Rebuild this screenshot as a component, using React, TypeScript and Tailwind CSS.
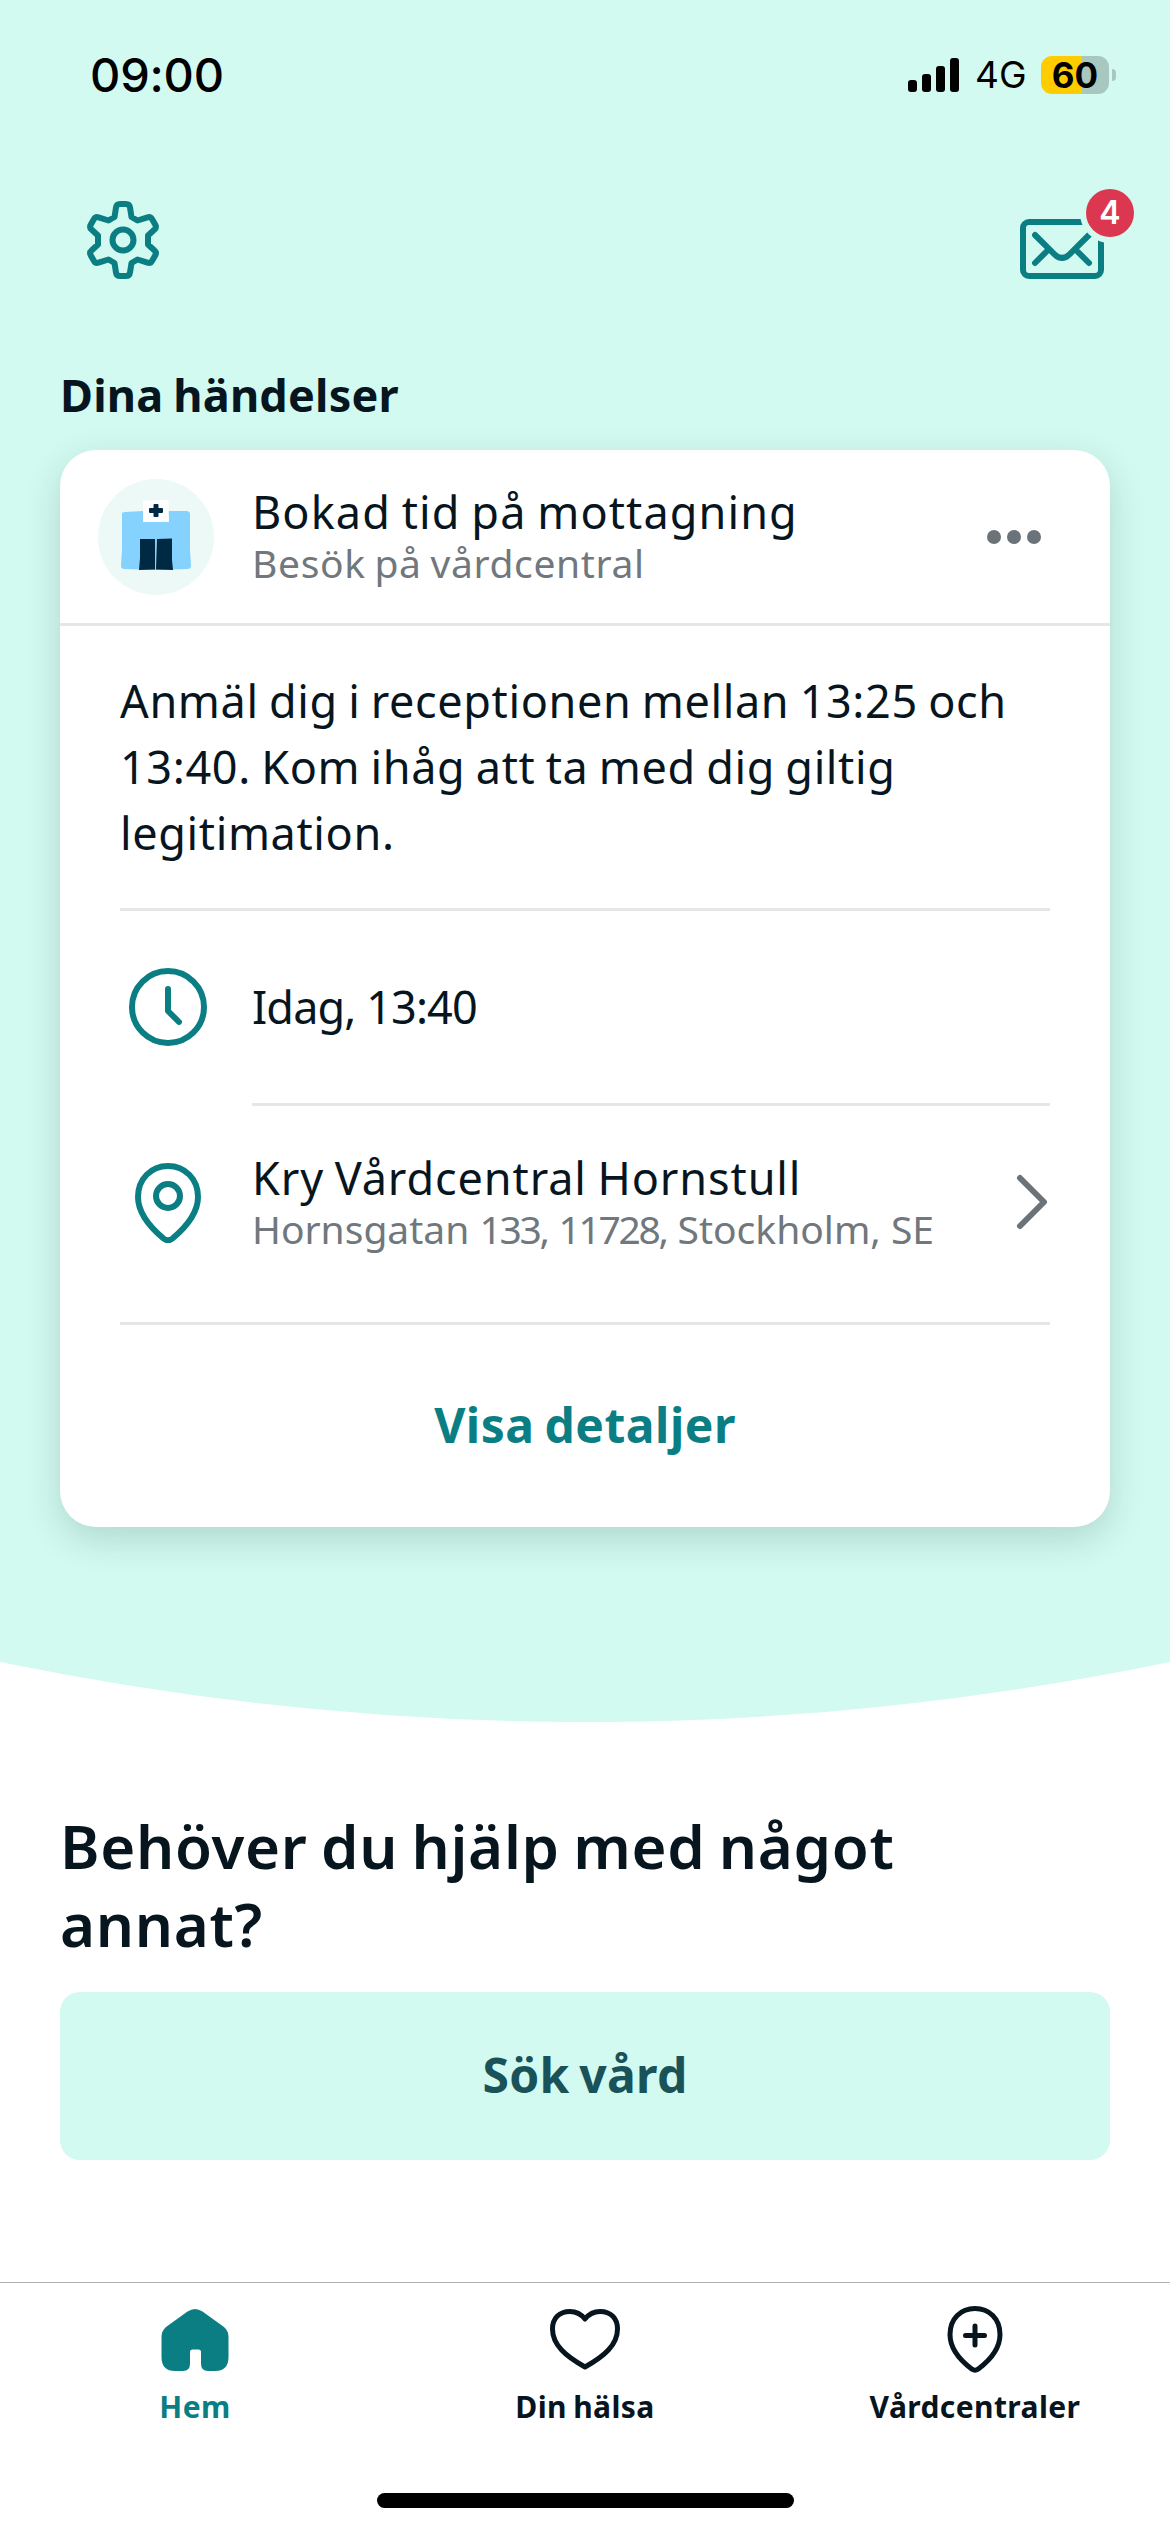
import type { ReactNode } from "react";

const FONT = "font-['Noto_Sans','Open_Sans',sans-serif]";
const STATUS_FONT = "font-['Inter','Liberation_Sans',sans-serif]";

function GearIcon() {
  return (
    <svg width="78" height="84" viewBox="84 198 78 84" fill="none" stroke="#0b7e84" strokeWidth="6" strokeLinejoin="round">
      <path d="M120 204H126Q129.500 204 130 207.500L131.500 217L137.500 220.500L147.500 217.300Q150.500 216.300 152 219L155.300 224.800Q156.800 227.500 154.500 229.500L148 235.500V244.500L154.500 250.500Q156.800 252.500 155.300 255.200L152 261Q150.500 263.700 147.500 262.700L137.500 259.500L131.500 263L130 272.500Q129.500 276 126 276H120Q116.500 276 116 272.500L114.500 263L108.500 259.500L98.500 262.700Q95.500 263.700 94 261L90.700 255.200Q89.200 252.500 91.500 250.500L98 244.500V235.500L91.500 229.500Q89.200 227.500 90.700 224.800L94 219Q95.500 216.300 98.500 217.300L108.500 220.500L114.500 217L116 207.500Q116.500 204 120 204Z" />
      <circle cx="123" cy="240" r="10.500" />
    </svg>
  );
}

function MailIcon() {
  return (
    <svg width="84" height="60" viewBox="1020 219 84 60" fill="none" stroke="#0b7e84" strokeWidth="6" strokeLinecap="round">
      <mask id="badge-gap" maskUnits="userSpaceOnUse" x="1010" y="180" width="110" height="110">
        <rect x="1010" y="180" width="110" height="110" fill="#fff" stroke="none" />
        <circle cx="1110" cy="213" r="30" fill="#000" stroke="none" />
      </mask>
      <g mask="url(#badge-gap)">
        <rect x="1023" y="222" width="78" height="54" rx="6" />
        <path d="M1035 235L1054.500 254.300Q1062 261.500 1069.500 254.300L1089 235M1035 263L1048 250M1089 263L1076 250" />
      </g>
    </svg>
  );
}

function ClinicIcon() {
  return (
    <svg width="116" height="116" viewBox="98 479 116 116">
      <circle cx="156" cy="537" r="58" fill="#edf9f7" />
      <path d="M122 514Q122 512 125 512L143 511H187Q190 511.500 190 514V550L191 566Q191 569 187 569L157 570L124 569Q121 568.500 121 566L122 550Z" fill="#84d2fd" />
      <path d="M143 500.500L168.500 500L169 522H143Z" fill="#fff" />
      <path d="M154.500 504H157.500Q158.500 504 158.500 505V508H162Q163 508 163 509V512Q163 513 162 513H158.500V516Q158.500 517 157.500 517H154.500Q153.500 517 153.500 516V513H150Q149 513 149 512V509Q149 508 150 508H153.500V505Q153.500 504 154.500 504Z" fill="#002943" />
      <path d="M140 539H155V569.500L139 570L140 558ZM157 539L172 538.500V560L173 570L156 569.500Z" fill="#002943" />
    </svg>
  );
}

function ClockIcon() {
  return (
    <svg width="78" height="78" viewBox="0 0 78 78" fill="none" stroke="#0b7e84" strokeWidth="6" strokeLinecap="round" strokeLinejoin="round">
      <circle cx="39" cy="39" r="36" />
      <path d="M39 21V43L50 54" />
    </svg>
  );
}

function PinIcon() {
  return (
    <svg width="66" height="80" viewBox="0 0 66 80" fill="none" stroke="#0b7e84" strokeWidth="6" strokeLinejoin="round">
      <path d="M33 3C16 3 3 16 3 34C3 50 16 65 28.500 75.500Q33 79 37.500 75.500C50 65 63 50 63 34C63 16 50 3 33 3Z" />
      <circle cx="33" cy="33" r="12" />
    </svg>
  );
}

function HomeIcon() {
  return (
    <svg width="68" height="62" viewBox="0 0 68 62" fill="#0b7e84">
      <path d="M26.500 2.500Q34 -2.500 41.500 2.500L63 18Q67.500 22 67.500 28V48Q67.500 62 54 62H47Q40 62 40 55V43Q40 40.500 37.500 40.500H31.500Q29 40.500 29 43V55Q29 62 22 62H14Q0.500 62 0.500 48V28Q0.500 22 5 18Z" />
    </svg>
  );
}

function HeartIcon() {
  return (
    <svg width="70" height="61" viewBox="0 0 70 61" fill="none" stroke="#07151e" strokeWidth="5" strokeLinejoin="round">
      <path d="M35 10C31 5 26 2.500 20 2.500C9 2.500 2.500 9.500 2.500 20C2.500 36 16 47.500 35 58C54 47.500 67.500 36 67.500 20C67.500 9.500 61 2.500 50 2.500C44 2.500 39 5 35 10Z" />
    </svg>
  );
}

function PinPlusIcon() {
  return (
    <svg width="56" height="67" viewBox="0 0 56 67" fill="none" stroke="#07151e" strokeWidth="5" strokeLinecap="round" strokeLinejoin="round">
      <path d="M28 2.500C14 2.500 3 12.500 3 28.500C3 42.500 14 55 25 63.200Q28 65.200 31 63.200C42 55 53 42.500 53 28.500C53 12.500 42 2.500 28 2.500Z" />
      <path d="M28 20V39M18.500 29.500H37.500" />
    </svg>
  );
}

function StatusBar() {
  return (
    <div className={`flex h-[150px] items-center justify-between pl-[90px] pr-[54px] text-black ${STATUS_FONT}`}>
      <span className="text-[47px] font-medium tracking-[-0.2px]">09:00</span>
      <div className="flex items-center">
        <div className="flex h-[34px] items-end gap-[5px]">
          <i className="h-3 w-[9px] rounded-[3px] bg-black" />
          <i className="h-[18px] w-[9px] rounded-[3px] bg-black" />
          <i className="h-[26px] w-[9px] rounded-[3px] bg-black" />
          <i className="h-[34px] w-[9px] rounded-[3px] bg-black" />
        </div>
        <span className="ml-4 w-[66px] text-[37px]">4G</span>
        <div className="flex h-[38px] w-[68px] items-center justify-center rounded-[11px] bg-linear-to-r from-[#fc0] from-60% to-[#a8c7bf] to-60% text-[35px] leading-none font-bold">
          60
        </div>
        <i className="ml-[3px] h-3 w-1 rounded-r-full bg-[#a8c7bf]" />
      </div>
    </div>
  );
}

function EventCard() {
  return (
    <section className="mx-[60px] mt-[27px] h-[1077px] rounded-[36px] bg-white shadow-[0_12px_36px_rgba(0,40,40,0.16)]">
      <header className="flex h-[176px] items-center border-b-3 border-[#e6e6e6] pr-[69px] pl-[38px]">
        <ClinicIcon />
        <div className="ml-[38px] grow pb-0.5">
          <h3 className="text-[45px] leading-[54px] tracking-[1.1px] [word-spacing:-2px]">Bokad tid på mottagning</h3>
          <p className="text-[39px] leading-[47px] tracking-[0.65px] text-[#70777d] [word-spacing:-2px]">Besök på vårdcentral</p>
        </div>
        <div className="flex gap-[6px]">
          <i className="size-[14px] rounded-full bg-[#6b7378]" />
          <i className="size-[14px] rounded-full bg-[#6b7378]" />
          <i className="size-[14px] rounded-full bg-[#6b7378]" />
        </div>
      </header>

      <div className="px-[60px]">
        <p className="h-[285px] border-b-3 border-[#e6e6e6] pt-[42px] text-[45px] leading-[66px] tracking-[0.63px] whitespace-nowrap [word-spacing:-2px]">
          Anmäl dig i receptionen mellan 13:25 och<br />
          13:40. Kom ihåg att ta med dig giltig<br />
          legitimation.
        </p>

        <div className="flex h-[195px]">
          <div className="flex w-[132px] items-center pb-[3px] pl-[9px]">
            <ClockIcon />
          </div>
          <div className="flex grow items-center border-b-3 border-[#e6e6e6] pb-px text-[45px]">
            <p className="tracking-[-0.9px]">Idag, 13:40</p>
          </div>
        </div>

        <div className="flex h-[219px] items-center border-b-3 border-[#e6e6e6]">
          <div className="w-[132px] pb-[22px] pl-[15px]">
            <PinIcon />
          </div>
          <div className="grow pb-[25px]">
            <p className="text-[45px] leading-[54px] tracking-[0.9px] [word-spacing:-2px]">Kry Vårdcentral Hornstull</p>
            <p className="text-[39px] leading-[47px] text-[#70777d]">
              Hornsgatan <span className="tracking-[-2.3px] [word-spacing:3px]">133, 11728, </span>Stockholm, SE
            </p>
          </div>
          <svg className="mb-[24px]" width="34" height="56" viewBox="0 0 34 56" fill="none" stroke="#6b7378" strokeWidth="6" strokeLinecap="round" strokeLinejoin="round">
            <path d="M4 4L28 28L4 52" />
          </svg>
        </div>

        <button className="flex h-[202px] w-full items-center justify-center pb-[3px] text-[48px] font-bold tracking-[0.5px] text-[#0b7e84] [word-spacing:-3px]">
          Visa detaljer
        </button>
      </div>
    </section>
  );
}

function Tab({ label, icon, active }: { label: string; icon: ReactNode; active?: boolean }) {
  return (
    <button className={`flex w-[390px] flex-col items-center ${active ? "text-[#0b7e84]" : "text-[#07151e]"}`}>
      <span className="flex h-[106px] items-center pt-[7px]">{icon}</span>
      <span className="text-[30px] leading-[36px] font-bold tracking-[0.4px] [word-spacing:-2px]">{label}</span>
    </button>
  );
}

export default function App() {
  return (
    <div className={`flex h-[2532px] w-[1170px] flex-col overflow-hidden bg-white text-[#07151e] ${FONT}`}>
      <div className="h-[1662px] bg-[#d2faf0]">
        <StatusBar />

        <div className="flex h-[207px] items-start justify-between pt-12 pr-[66px] pl-[84px]">
          <button>
            <GearIcon />
          </button>
          <button className="relative mt-[21px]">
            <MailIcon />
            <span className={`absolute -top-[30px] left-[66px] flex size-12 items-center justify-center rounded-full bg-[#dc3750] text-[32px] leading-none font-semibold text-white ${STATUS_FONT}`}>
              4
            </span>
          </button>
        </div>

        <h2 className="mx-[60px] h-[66px] text-[45px] leading-[76px] font-bold tracking-[0.2px] [word-spacing:-2px]">Dina händelser</h2>
        <EventCard />
      </div>

      <svg className="block shrink-0" width="1170" height="61" viewBox="0 0 1170 61">
        <path d="M0 0Q585 120 1170 0Z" fill="#d2faf0" />
      </svg>

      <section className="px-[60px] pt-[84px]">
        <h1 className="text-[60px] leading-[78px] font-semibold tracking-[0.7px] whitespace-nowrap [word-spacing:-3px]">
          Behöver du hjälp med något<br />annat?
        </h1>
        <button className="mt-[29px] h-[168px] w-full rounded-[20px] bg-[#d2faf0] pb-[3px] text-[48px] font-bold tracking-[0.3px] text-[#195259] [word-spacing:-3px]">
          Sök vård
        </button>
      </section>

      <nav className="mt-auto flex h-[250px] flex-col items-center border-t border-[#b2b2b2]">
        <div className="flex w-full">
          <Tab label="Hem" icon={<HomeIcon />} active />
          <Tab label="Din hälsa" icon={<HeartIcon />} />
          <Tab label="Vårdcentraler" icon={<PinPlusIcon />} />
        </div>
        <div className="mt-[68px] h-[15px] w-[417px] rounded-full bg-black" />
      </nav>
    </div>
  );
}
